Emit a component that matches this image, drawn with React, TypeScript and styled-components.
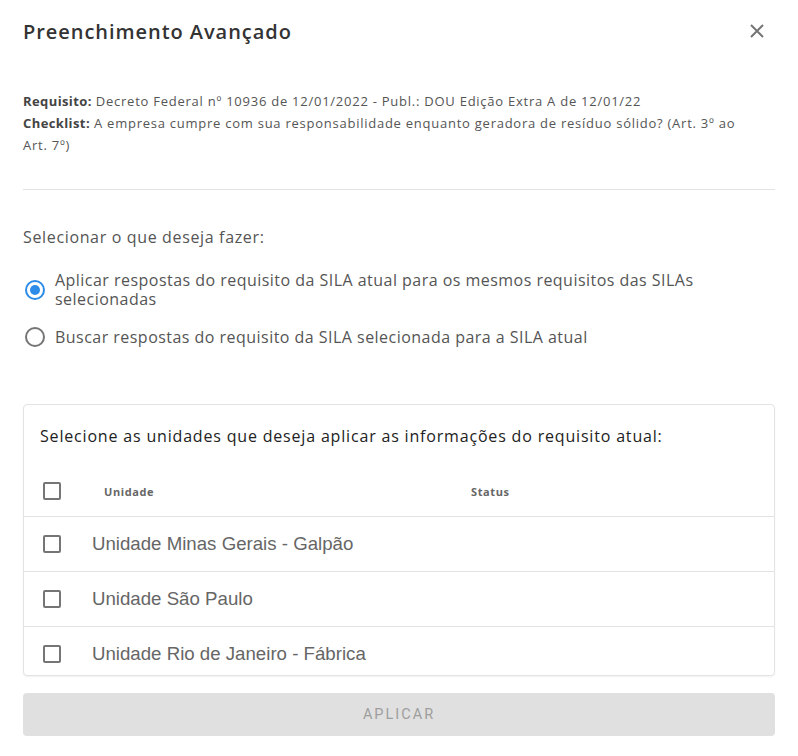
import React, { useState } from 'react';
import styled, { createGlobalStyle } from 'styled-components';

const GlobalStyle = createGlobalStyle`
  body {
    margin: 0;
    background: #fff;
    font-family: 'Open Sans', 'Noto Sans', sans-serif;
  }
`;

const Dialog = styled.div`
  width: 798px;
  box-sizing: border-box;
  padding: 0 23px;
`;

const Header = styled.div`
  display: flex;
  align-items: center;
  justify-content: space-between;
  height: 62px;
`;

const Title = styled.h2`
  margin: 0;
  font-size: 20px;
  font-weight: 600;
  color: #333;
  letter-spacing: 0.95px;
`;

const CloseButton = styled.button`
  border: none;
  background: none;
  padding: 0;
  width: 18px;
  height: 18px;
  margin-right: 9px;
  display: flex;
  align-items: center;
  justify-content: center;
  cursor: pointer;
`;

const Info = styled.div`
  padding: 28px 0 33px;
  font-size: 13px;
  line-height: 22px;
  letter-spacing: 0.75px;
  color: #555;
  border-bottom: 1px solid #e3e3e3;
`;

const InfoLine = styled.div`
  min-height: 22px;
`;

const Label = styled.b`
  font-weight: 700;
  color: #444;
  letter-spacing: 0.4px;
  margin-right: 4px;
`;

const Prompt = styled.p`
  margin: 36px 0 23px;
  font-size: 16px;
  line-height: 22px;
  letter-spacing: 0.65px;
  color: #555;
`;

const RadioList = styled.div`
  display: flex;
  flex-direction: column;
  gap: 18px;
`;

const RadioLabel = styled.label`
  display: flex;
  align-items: center;
  gap: 10px;
  font-size: 16px;
  line-height: 19px;
  letter-spacing: 0.47px;
  color: #555;
  cursor: pointer;
  input {
    display: none;
  }
`;

const RadioCircle = styled.span<{ $checked: boolean }>`
  flex: none;
  box-sizing: border-box;
  width: 20px;
  height: 20px;
  margin-left: 2px;
  border-radius: 50%;
  border: 2px solid ${(p) => (p.$checked ? '#2c8ce8' : '#757575')};
  display: flex;
  align-items: center;
  justify-content: center;
  &::after {
    content: '';
    width: 10px;
    height: 10px;
    border-radius: 50%;
    background: ${(p) => (p.$checked ? '#2c8ce8' : 'transparent')};
  }
`;

const Card = styled.div`
  margin-top: 57px;
  border: 1px solid #e3e3e3;
  border-radius: 4px;
  box-shadow: 0 1px 2px rgba(0, 0, 0, 0.06);
  overflow: hidden;
`;

const CardTitle = styled.div`
  padding: 21px 16px 0;
  font-size: 16px;
  line-height: 20px;
  font-weight: 500;
  letter-spacing: 0.82px;
  color: #222;
`;

const Row = styled.div<{ $head?: boolean }>`
  display: grid;
  grid-template-columns: 49px 367px 1fr;
  align-items: center;
  height: ${(p) => (p.$head ? '50px' : '54px')};
  padding-left: 19px;
  border-top: ${(p) => (p.$head ? 'none' : '1px solid #e3e3e3')};
  margin-top: ${(p) => (p.$head ? '20px' : '0')};
`;

const Body = styled.div`
  max-height: 159px;
  overflow: hidden;
`;

const HeadCell = styled.div`
  font-size: 11px;
  font-weight: 700;
  letter-spacing: 0.6px;
  color: #666;
  padding-left: 12px;
`;

const UnitName = styled.div`
  font-family: 'Liberation Sans', Arial, sans-serif;
  font-size: 18.67px;
  color: #666;
`;

const Box = styled.span`
  display: block;
  box-sizing: border-box;
  width: 18px;
  height: 18px;
  border: 2px solid #757575;
  border-radius: 2px;
`;

const ApplyButton = styled.button`
  display: block;
  width: 100%;
  height: 43px;
  margin-top: 17px;
  border: none;
  border-radius: 4px;
  background: #e0e0e0;
  color: #9e9e9e;
  font-family: Roboto, 'Liberation Sans', sans-serif;
  font-size: 14.5px;
  letter-spacing: 2px;
  text-transform: uppercase;
`;

const units = [
  'Unidade Minas Gerais - Galpão',
  'Unidade São Paulo',
  'Unidade Rio de Janeiro - Fábrica',
];

const options = [
  'Aplicar respostas do requisito da SILA atual para os mesmos requisitos das SILAs selecionadas',
  'Buscar respostas do requisito da SILA selecionada para a SILA atual',
];

export default function App() {
  const [mode, setMode] = useState(0);

  return (
    <Dialog>
      <GlobalStyle />
      <Header>
        <Title>Preenchimento Avançado</Title>
        <CloseButton aria-label="Fechar">
          <svg width="14" height="14" viewBox="0 0 14 14">
            <path d="M1 1 L13 13 M13 1 L1 13" stroke="#757575" strokeWidth="2" />
          </svg>
        </CloseButton>
      </Header>
      <Info>
        <InfoLine>
          <Label>Requisito:</Label>Decreto Federal nº 10936 de 12/01/2022 - Publ.: DOU Edição Extra A de 12/01/22
        </InfoLine>
        <InfoLine>
          <Label>Checklist:</Label>A empresa cumpre com sua responsabilidade enquanto geradora de resíduo sólido? (Art. 3º ao Art.{'\u00a0'}7º)
        </InfoLine>
      </Info>
      <Prompt>Selecionar o que deseja fazer:</Prompt>
      <RadioList>
        {options.map((text, i) => (
          <RadioLabel key={text}>
            <input type="radio" checked={mode === i} onChange={() => setMode(i)} />
            <RadioCircle $checked={mode === i} />
            <span>{text}</span>
          </RadioLabel>
        ))}
      </RadioList>
      <Card>
        <CardTitle>Selecione as unidades que deseja aplicar as informações do requisito atual:</CardTitle>
        <Row $head>
          <Box />
          <HeadCell>Unidade</HeadCell>
          <HeadCell>Status</HeadCell>
        </Row>
        <Body>
          {units.map((u) => (
            <Row key={u}>
              <Box />
              <UnitName>{u}</UnitName>
              <div />
            </Row>
          ))}
        </Body>
      </Card>
      <ApplyButton disabled>Aplicar</ApplyButton>
    </Dialog>
  );
}
